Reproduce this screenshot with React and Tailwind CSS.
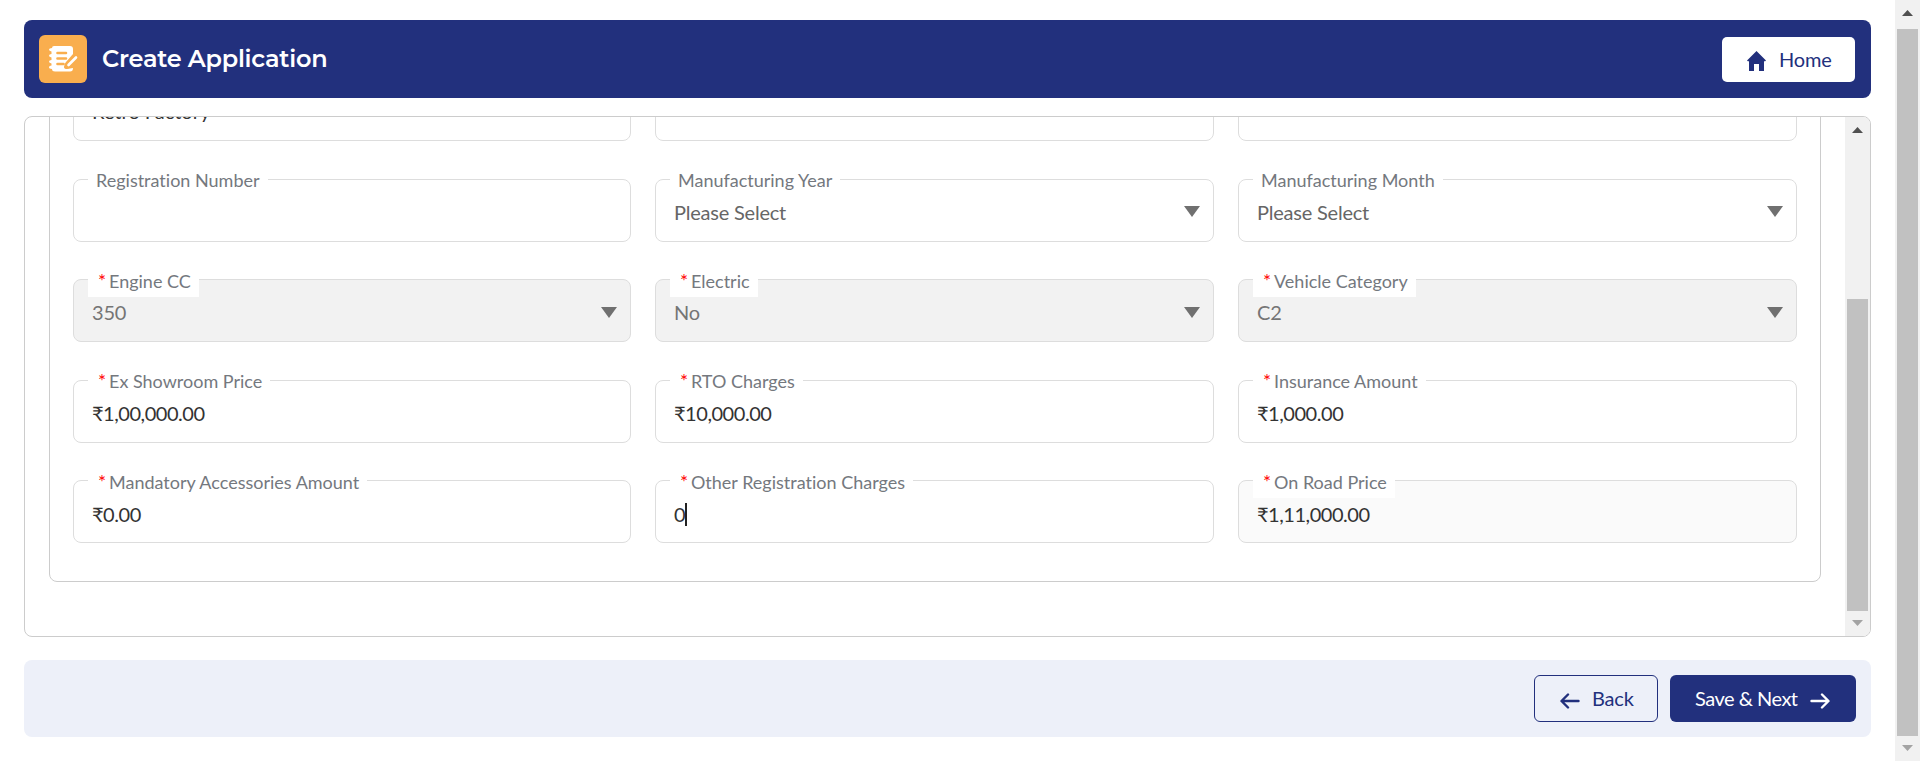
const ROWS = [
  [
    { label: '', value: 'Retro Factory', kind: 'text' },
    { label: '', value: '' },
    { label: '', value: '' },
  ],
  [
    { label: 'Registration Number', value: '' },
    { label: 'Manufacturing Year', value: 'Please Select', kind: 'select' },
    { label: 'Manufacturing Month', value: 'Please Select', kind: 'select' },
  ],
  [
    { label: 'Engine CC', value: '350', kind: 'select', required: true, disabled: true },
    { label: 'Electric', value: 'No', kind: 'select', required: true, disabled: true },
    { label: 'Vehicle Category', value: 'C2', kind: 'select', required: true, disabled: true },
  ],
  [
    { label: 'Ex Showroom Price', value: '₹1,00,000.00', required: true },
    { label: 'RTO Charges', value: '₹10,000.00', required: true },
    { label: 'Insurance Amount', value: '₹1,000.00', required: true },
  ],
  [
    { label: 'Mandatory Accessories Amount', value: '₹0.00', required: true },
    { label: 'Other Registration Charges', value: '0', kind: 'text', required: true, focused: true },
    { label: 'On Road Price', value: '₹1,11,000.00', required: true, readOnly: true },
  ],
];

function Field({ label, value, kind, required, disabled, readOnly, focused }) {
  const bg = disabled ? 'bg-[#f2f2f2]' : readOnly ? 'bg-[#fafafa]' : 'bg-white';
  const color = disabled ? 'text-[#757575]' : kind === 'select' ? 'text-[#666666]' : 'text-[#333333]';
  const tracking = kind === 'select' ? 'tracking-[-0.22px]' : kind === 'text' ? 'tracking-normal' : 'tracking-[-0.46px]';
  const top = focused || !kind ? 'pt-[4px]' : 'pt-[3px]';
  return (
    <div className={`relative flex h-[63px] items-center justify-between rounded-lg border border-[#dddddd] pl-[18px] pr-[13px] ${top} ${bg}`}>
      {label && (
        <div className="absolute -top-[10px] left-[14px] flex h-[27px] items-center whitespace-nowrap bg-white px-2 pb-[6px] text-[18px] leading-[22px] text-[#74787e]">
          {required && <span className="ml-[2px] mr-[3px] w-[8px] text-[19px] text-[#ff0000]">*</span>}
          <span>{label}</span>
        </div>
      )}
      <div className={`flex items-center text-[20px] leading-6 ${color} ${tracking}`}>
        <span>{value}</span>
        {focused && <span className="-ml-[0.5px] mt-px h-[23px] w-[2px] bg-[#222222]" />}
      </div>
      {kind === 'select' && (
        <svg className="h-[11px] w-[16px]" viewBox="0 0 16 11">
          <path d="M0 0h16L8 11z" fill="#707070" />
        </svg>
      )}
    </div>
  );
}

function Arrow({ down }) {
  return (
    <svg className="h-[6px] w-[11px]" viewBox="0 0 11 6">
      <path d={down ? 'M0 0h11L5.5 6z' : 'M0 6h11L5.5 0z'} fill={down ? '#a3a3a3' : '#505050'} />
    </svg>
  );
}

export default function App() {
  return (
    <div className="flex h-[761px] w-[1920px] overflow-hidden bg-white font-['Lato',sans-serif] [font-variant-ligatures:none]">
      <div className="flex w-[1895px] flex-col pl-6 pr-6 pt-5">
        <header className="flex h-[78px] shrink-0 items-center rounded-lg bg-[#22307d] pl-[15px] pr-4">
          <div className="flex h-12 w-12 items-center justify-center rounded-md bg-[#f9ae4e]">
            <svg className="h-[28px] w-[30px]" viewBox="0 0 30 28" fill="none">
              <path d="M6 1h16q3 0 3 3v5L18 17q-2 2-2 5 0 2 3 2l6-1q0 3.500-3 3.500H7q-3 0-3-2.500-3 0-3-1.700T3.500 20.500v-2Q1 18 1 16.500T3.500 15v-2.500Q1 12 1 10.700T3.500 9V6.500Q1 6 1 4.600T4 3Q4 1 6 1z" fill="#fff" />
              <path d="M9.500 8h8.500M9.500 13.500h8.500M9.500 19h6" stroke="#f9ae4e" strokeWidth="2.600" strokeLinecap="round" />
              <path d="M20 20.500L28 12.500" stroke="#f9ae4e" strokeWidth="5.500" strokeLinecap="round" />
              <path d="M20.500 20L28 12.500" stroke="#fff" strokeWidth="2.600" strokeLinecap="round" />
            </svg>
          </div>
          <h1 className="ml-[15px] flex-1 font-['Montserrat','Inter',sans-serif] text-[24px] font-semibold leading-[30px] tracking-[-0.25px] text-white">Create Application</h1>
          <button className="flex h-[45px] w-[133px] items-center rounded-[5px] bg-white pl-[25px] pt-[2px] text-[20px] text-[#22307d]">
            <svg className="mt-[2px] h-[20px] w-[19px]" viewBox="0 0 19 20">
              <path d="M9.500 0L19 9.500l-.8.800H17V20h-5v-7H7v7H2V10.300H.8L0 9.500z" fill="#22307d" />
            </svg>
            <span className="-mt-[2px] ml-[13px] tracking-[-0.2px]">Home</span>
          </button>
        </header>

        <main className="mt-[18px] flex h-[521px] shrink-0 overflow-hidden rounded-lg border border-[#cccccc]">
          <div className="flex flex-1 flex-col justify-end overflow-hidden px-6 pb-[54px]">
            <section className="shrink-0 rounded-lg border border-[#cccccc] px-[23px] pb-[38px] pt-12">
              <div className="-mb-[37.500px] grid auto-rows-[100.5px] grid-cols-[558px_559px_559px] gap-x-6">
                {ROWS.flat().map((f, i) => (
                  <Field key={i} {...f} />
                ))}
              </div>
            </section>
          </div>
          <div className="flex w-[25px] flex-col items-center bg-[#f1f1f1] pr-px">
            <div className="flex h-[25px] items-center"><Arrow /></div>
            <div className="mt-[157px] h-[312px] w-[21px] bg-[#c1c1c1]" />
            <div className="flex h-[25px] items-center pb-[2px]"><Arrow down /></div>
          </div>
        </main>

        <footer className="mt-[23px] flex h-[77px] shrink-0 items-center justify-end gap-3 rounded-lg bg-[#edf0f9] pr-[15px] text-[20px]">
          <button className="flex h-[47px] w-[124px] items-center rounded-md border border-[#22307d] pl-[25px] text-[#22307d]">
            <svg className="mt-[4px] h-4 w-5" viewBox="0 0 20 16" fill="none" stroke="#22307d" strokeWidth="2.400" strokeLinecap="round" strokeLinejoin="round">
              <path d="M18.500 8H2M8 1.500L1.500 8 8 14.500" />
            </svg>
            <span className="-mt-[2px] ml-[12px] tracking-[-0.2px]">Back</span>
          </button>
          <button className="flex h-[47px] w-[186px] items-center rounded-md bg-[#22307d] pl-[25px] text-white">
            <span className="-mt-[2px] tracking-[-0.5px]">Save &amp; Next</span>
            <svg className="ml-[12px] mt-[4px] h-4 w-5" viewBox="0 0 20 16" fill="none" stroke="#fff" strokeWidth="2.400" strokeLinecap="round" strokeLinejoin="round">
              <path d="M1.500 8H18M12 1.500L18.500 8 12 14.500" />
            </svg>
          </button>
        </footer>
      </div>
      <div className="flex w-[25px] flex-col items-center bg-[#f1f1f1]">
        <div className="flex h-[29px] items-center pb-[3px]"><Arrow /></div>
        <div className="h-[707px] w-[21px] bg-[#c1c1c1]" />
        <div className="flex h-[25px] items-center pb-[2px]"><Arrow down /></div>
      </div>
    </div>
  );
}
